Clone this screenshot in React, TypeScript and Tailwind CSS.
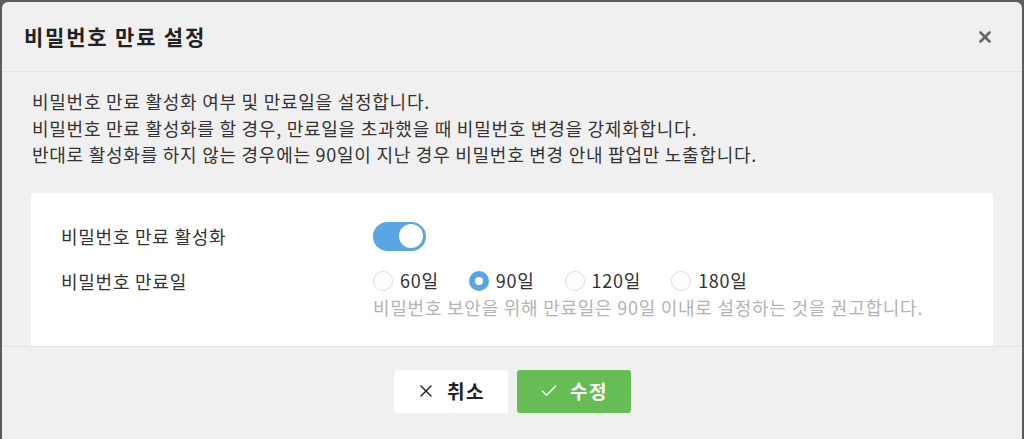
import { X, Check } from "lucide-react";

const font = "font-['Noto_Sans_CJK_KR','Noto_Sans',sans-serif]";

const periods = [60, 90, 120, 180];

function Radio({ label, checked }: { label: string; checked?: boolean }) {
  return (
    <label className="flex items-center gap-[7px] mr-[30px]">
      {checked ? (
        <span className="w-[20px] h-[20px] rounded-full bg-[#5aa5e3] flex items-center justify-center">
          <span className="w-[8px] h-[8px] rounded-full bg-white" />
        </span>
      ) : (
        <span className="w-[20px] h-[20px] rounded-full border border-[#dcdcdc] bg-white" />
      )}
      <span className="text-[#333]">{label}</span>
    </label>
  );
}

export default function App() {
  return (
    <div className={`w-full h-[439px] bg-[#5c5c5c] pt-[2px] px-[2px] overflow-hidden ${font}`}>
      <div className="h-full bg-[#f0f0f0] rounded-t-md flex flex-col">
        <div className="h-[70px] shrink-0 flex items-center justify-between pl-[22px] pr-[28px] border-b border-[#e2e2e2]">
          <h2 className="text-[21px] font-bold tracking-[1.8px] text-[#222]">비밀번호 만료 설정</h2>
          <X size={18} strokeWidth={3.5} className="text-[#666]" />
        </div>

        <div className="px-[29px] pt-[16px] text-[18px] tracking-[0.75px] leading-[26.5px] text-[#333]">
          <p className="pl-[1px]">
            비밀번호 만료 활성화 여부 및 만료일을 설정합니다.
            <br />
            비밀번호 만료 활성화를 할 경우, 만료일을 초과했을 때 비밀번호 변경을 강제화합니다.
            <br />
            반대로 활성화를 하지 않는 경우에는 90일이 지난 경우 비밀번호 변경 안내 팝업만 노출합니다.
          </p>

          <div className="mt-[25px] h-[153px] bg-white rounded-t-[3px] pl-[30px] pt-[29px] flex flex-col gap-[17px]">
            <div className="flex items-center h-[29px]">
              <span className="w-[312px]">비밀번호 만료 활성화</span>
              <span className="w-[53px] h-[29px] rounded-full bg-[#5aa5e3] flex items-center justify-end pr-[3px]">
                <span className="w-[24px] h-[24px] rounded-full bg-white" />
              </span>
            </div>
            <div className="flex items-start">
              <span className="w-[312px] leading-[26px]">비밀번호 만료일</span>
              <div className="flex flex-col">
                <div className="flex items-center h-[26px]">
                  {periods.map((p) => (
                    <Radio key={p} label={`${p}일`} checked={p === 90} />
                  ))}
                </div>
                <p className="text-[#b3b3b3] leading-[26px]">
                  비밀번호 보안을 위해 만료일은 90일 이내로 설정하는 것을 권고합니다.
                </p>
              </div>
            </div>
          </div>
        </div>

        <div className="border-t border-[#e2e2e2] pt-[23px] flex justify-center gap-[9px]">
          <button className="w-[114px] h-[43px] rounded-[3px] bg-white flex items-center justify-center gap-[11px] text-[19px] tracking-[1.5px] font-bold text-[#222]">
            <X size={20} strokeWidth={1.7} />
            취소
          </button>
          <button className="w-[114px] h-[43px] rounded-[3px] bg-[#67bd55] flex items-center justify-center gap-[11px] text-[19px] tracking-[1.5px] font-bold text-white">
            <Check size={20} strokeWidth={1.7} />
            수정
          </button>
        </div>
      </div>
    </div>
  );
}
